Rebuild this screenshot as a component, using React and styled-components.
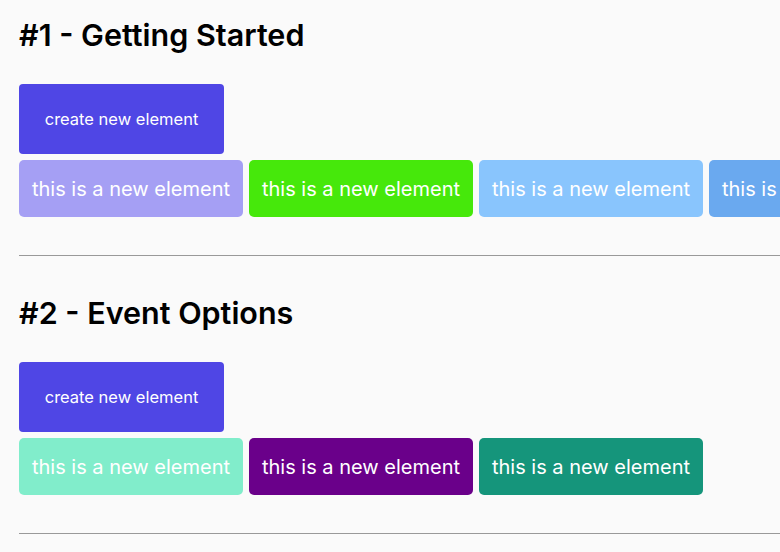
import React from 'react'
import styled, { createGlobalStyle } from 'styled-components'

const GlobalStyle = createGlobalStyle`
  html, body {
    margin: 0;
    padding: 0;
    background: #fafafa;
    font-family: Inter, "Noto Sans", sans-serif;
    overflow: hidden;
  }
`

const sections = [
  {
    title: '#1 - Getting Started',
    colors: ['#a59ff4', '#46e80b', '#89c5fd', '#6aa9ef'],
  },
  {
    title: '#2 - Event Options',
    colors: ['#81edcb', '#6a008a', '#15957b'],
  },
]

const App = () => {
  return (
    <Page>
      <GlobalStyle />
      {sections.map((section, index) => (
        <Section key={index}>
          <Title>{section.title}</Title>
          <CreateButton>create new element</CreateButton>
          <Row>
            {section.colors.map((color, i) => (
              <Element key={i} bg={color}>this is a new element</Element>
            ))}
          </Row>
          <Divider />
        </Section>
      ))}
    </Page>
  )
}

export default App

const Page = styled.div`
  padding: 18px 0 0 19px;
`
const Section = styled.section`
  display: flex;
  flex-direction: column;
  align-items: flex-start;
`
const Title = styled.h2`
  margin: 0 0 32px;
  font-size: 30.5px;
  line-height: 34px;
  font-weight: 600;
  color: #000;
`
const CreateButton = styled.button`
  width: 205px;
  height: 70px;
  border: none;
  border-radius: 4px;
  background: #4f46e5;
  color: #fff;
  font-family: Inter, sans-serif;
  font-size: 16.5px;
  cursor: pointer;
`
const Row = styled.div`
  display: flex;
  gap: 6px;
  margin-top: 6px;
  white-space: nowrap;
`
const Element = styled.div`
  flex: none;
  width: 224px;
  height: 57px;
  box-sizing: border-box;
  display: flex;
  align-items: center;
  justify-content: center;
  border-radius: 5px;
  background: ${props => props.bg};
  color: #fff;
  font-size: 20px;
`
const Divider = styled.hr`
  align-self: stretch;
  margin: 38px 0 40px;
  border: none;
  border-top: 1px solid #999;
  height: 0;
`
